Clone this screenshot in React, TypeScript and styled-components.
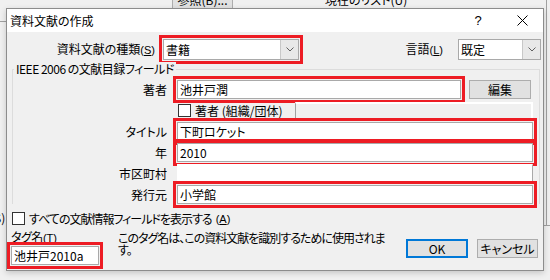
import styled, { createGlobalStyle, css } from "styled-components";

const GlobalStyle = createGlobalStyle`
  html, body {
    margin: 0;
    padding: 0;
    background: #f0f0f0;
  }
  body {
    font-family: "Noto Sans CJK JP", "Liberation Sans", sans-serif;
    font-size: 12px;
    color: #000;
  }
`;

const uiFont = css`
  font-family: "Noto Sans CJK JP", "Liberation Sans", sans-serif;
  font-feature-settings: "palt";
  font-size: 12px;
  line-height: 14px;
`;

const marked = css`
  outline: 3px solid #ed1c24;
  outline-offset: 1px;
`;

const Desktop = styled.div`
  position: relative;
  width: 550px;
  height: 280px;
  overflow: hidden;
  background: #f0f0f0;
  ${uiFont}
`;

/* pieces of the window behind the dialog */
const BackButton = styled.div`
  position: absolute;
  left: 172px;
  top: -10px;
  width: 59px;
  height: 18px;
  border: 1px solid #adadad;
  background: #e1e1e1;
  display: flex;
  align-items: center;
  justify-content: center;
`;

const BackText = styled.div<{ $x: number; $y: number }>`
  position: absolute;
  left: ${(p) => p.$x}px;
  top: ${(p) => p.$y}px;
  white-space: nowrap;
`;

const BackLine = styled.div<{ $x: number; $y: number; $w: number; $h: number }>`
  position: absolute;
  left: ${(p) => p.$x}px;
  top: ${(p) => p.$y}px;
  width: ${(p) => p.$w}px;
  height: ${(p) => p.$h}px;
  background: #a0a0a0;
`;

const Dialog = styled.div`
  position: absolute;
  left: 6px;
  top: 8px;
  width: 536px;
  height: 261px;
  border: 1px solid #8c8c8c;
  background: #f0f0f0;
  box-shadow: 0 2px 6px rgba(0, 0, 0, 0.18);
  display: flex;
  flex-direction: column;
`;

const TitleBar = styled.div`
  height: 23px;
  background: #fff;
  display: flex;
  align-items: center;
  padding-left: 3px;
`;

const Title = styled.div`
  flex: 1;
`;

const CaptionButton = styled.div<{ $w: number }>`
  width: ${(p) => p.$w}px;
  height: 23px;
  display: flex;
  align-items: center;
  justify-content: center;
  font-size: 13px;
  font-family: "Liberation Sans", sans-serif;
`;

const Body = styled.div`
  flex: 1;
  display: flex;
  flex-direction: column;
  padding-top: 7px;
`;

const TopRow = styled.div`
  display: flex;
  align-items: center;
  height: 21px;
`;

const RowLabel = styled.div<{ $w?: number }>`
  width: ${(p) => (p.$w ? `${p.$w}px` : "auto")};
  text-align: right;
  white-space: nowrap;
`;

/* access key "(X)" with underlined letter */
const Accel = styled.span`
  font-family: "Liberation Sans", sans-serif;
  font-size: 11px;
  letter-spacing: 0;
  & u {
    text-underline-offset: 1px;
  }
`;

const Combo = styled.div<{ $w: number; $marked?: boolean }>`
  box-sizing: border-box;
  width: ${(p) => p.$w}px;
  height: 21px;
  border: 1px solid #a9a9a9;
  background: #fff;
  display: flex;
  align-items: stretch;
  ${(p) => p.$marked && marked}
`;

const ComboText = styled.div`
  flex: 1;
  padding-left: 2px;
  display: flex;
  align-items: center;
`;

const ComboArrow = styled.div`
  width: 17px;
  background: #e8e8e8;
  border-left: 1px solid #c8c8c8;
  display: flex;
  align-items: center;
  justify-content: center;
`;

const Spacer = styled.div`
  flex: 1;
`;

const Group = styled.div`
  position: relative;
  box-sizing: border-box;
  margin: 9px 0 0 5px;
  width: 528px;
  border: 1px solid #dcdcdc;
  border-bottom: none;
  padding: 10px 6px 0 0;
  display: grid;
  grid-template-columns: 154px 1fr;
  grid-auto-rows: 19px;
  column-gap: 10px;
  row-gap: 2px;
`;

const Legend = styled.div`
  position: absolute;
  left: 1px;
  top: -8px;
  padding: 0 2px;
  background: #f0f0f0;
  white-space: nowrap;
  letter-spacing: -0.5px;
`;

const FieldLabel = styled.div`
  display: flex;
  align-items: center;
  justify-content: flex-end;
  white-space: nowrap;
`;

const Field = styled.div<{ $marked?: boolean; $plain?: boolean }>`
  box-sizing: border-box;
  height: 19px;
  background: #fff;
  border: 1px solid ${(p) => (p.$plain ? "#fff" : "#a9a9a9")};
  border-right-color: #a9a9a9;
  padding-left: 2px;
  display: flex;
  align-items: center;
  white-space: nowrap;
  ${(p) => p.$marked && marked}
`;

const FieldRow = styled.div`
  display: flex;
  align-items: center;
  gap: 8px;
`;

const Button = styled.div<{ $w: number; $default?: boolean }>`
  box-sizing: border-box;
  width: ${(p) => p.$w}px;
  height: 19px;
  background: #e1e1e1;
  border: ${(p) => (p.$default ? "2px solid #0078d7" : "1px solid #adadad")};
  display: flex;
  align-items: center;
  justify-content: center;
  white-space: nowrap;
`;

const CheckLine = styled.div<{ $indent?: number; $tight?: boolean }>`
  display: flex;
  align-items: center;
  gap: 4px;
  margin-left: ${(p) => p.$indent ?? 0}px;
  white-space: nowrap;
  letter-spacing: ${(p) => (p.$tight ? "-1px" : "0")};
`;

const Check = styled.div`
  box-sizing: border-box;
  width: 13px;
  height: 13px;
  border: 1px solid #333;
  background: #fff;
  flex: none;
`;

const DisabledBox = styled.div`
  box-sizing: border-box;
  margin-left: auto;
  width: 238px;
  height: 18px;
  background: #f0f0f0;
  border-top: 2px solid #fff;
  border-right: 2px solid #fff;
  border-left: 1px solid #a0a0a0;
  border-bottom: 1px solid #e6e6e6;
`;

const ShowAll = styled.div`
  margin: 8px 0 0 5px;
  height: 13px;
  display: flex;
`;

const BottomRow = styled.div`
  display: flex;
  align-items: flex-start;
  margin-top: 5px;
`;

const TagColumn = styled.div`
  margin-left: 4px;
  display: flex;
  flex-direction: column;
  gap: 1px;
`;

const TagLabel = styled.div`
  letter-spacing: -0.5px;
`;

const TagInput = styled(Field)`
  width: 88px;
`;

const Description = styled.div`
  margin: 2px 0 0 19px;
  line-height: 12px;
  white-space: nowrap;
  letter-spacing: -1px;
`;

const Buttons = styled.div`
  margin: 9px 5px 0 auto;
  display: flex;
  gap: 9px;
`;

const Chevron = () => (
  <svg width="8" height="5" viewBox="0 0 8 5">
    <path d="M0.5 0.5 L4 4 L7.5 0.5" fill="none" stroke="#606060" strokeWidth="1" />
  </svg>
);

const CloseIcon = () => (
  <svg width="11" height="11" viewBox="0 0 11 11">
    <path d="M0.5 0.5 L10.5 10.5 M10.5 0.5 L0.5 10.5" stroke="#000" strokeWidth="1" />
  </svg>
);

export default function App() {
  return (
    <Desktop>
      <GlobalStyle />
      <BackButton>参照(B)...</BackButton>
      <BackText $x={325} $y={-7}>現在のリスト(U)</BackText>
      <BackText $x={-10} $y={211}>(S)</BackText>
      <BackLine $x={0} $y={21} $w={6} $h={1} />
      <BackLine $x={546} $y={0} $w={1} $h={225} />
      <BackLine $x={544} $y={225} $w={6} $h={1} />

      <Dialog>
        <TitleBar>
          <Title>資料文献の作成</Title>
          <CaptionButton $w={30}>?</CaptionButton>
          <CaptionButton $w={42} style={{ marginLeft: 8 }}>
            <CloseIcon />
          </CaptionButton>
        </TitleBar>

        <Body>
          <TopRow>
            <RowLabel $w={148}>
              資料文献の種類<Accel>(<u>S</u>)</Accel>
            </RowLabel>
            <Combo $w={136} $marked style={{ marginLeft: 8 }}>
              <ComboText>書籍</ComboText>
              <ComboArrow>
                <Chevron />
              </ComboArrow>
            </Combo>
            <Spacer />
            <RowLabel>
              言語<Accel>(<u>L</u>)</Accel>
            </RowLabel>
            <Combo $w={83} style={{ margin: "0 2px 0 15px" }}>
              <ComboText>既定</ComboText>
              <ComboArrow>
                <Chevron />
              </ComboArrow>
            </Combo>
          </TopRow>

          <Group>
            <Legend>IEEE 2006 の文献目録フィールド</Legend>

            <FieldLabel>著者</FieldLabel>
            <FieldRow>
              <Field $marked style={{ flex: 1 }}>
                池井戸潤
              </Field>
              <Button $w={62} style={{ marginRight: 2 }}>
                編集
              </Button>
            </FieldRow>

            <div />
            <FieldRow>
              <CheckLine $indent={1}>
                <Check />
                著者 (組織/団体)
              </CheckLine>
              <DisabledBox />
            </FieldRow>

            <FieldLabel>タイトル</FieldLabel>
            <Field $marked>下町ロケット</Field>

            <FieldLabel>年</FieldLabel>
            <Field $marked>2010</Field>

            <FieldLabel>市区町村</FieldLabel>
            <Field $plain />

            <FieldLabel>発行元</FieldLabel>
            <Field $marked>小学館</Field>
          </Group>

          <ShowAll>
            <CheckLine $tight>
              <Check />
              すべての文献情報フィールドを表示する<Accel>(<u>A</u>)</Accel>
            </CheckLine>
          </ShowAll>

          <BottomRow>
            <TagColumn>
              <TagLabel>
                タグ名<Accel>(<u>T</u>)</Accel>
              </TagLabel>
              <TagInput $marked>池井戸2010a</TagInput>
            </TagColumn>
            <Description>
              このタグ名は、この資料文献を識別するために使用されま
              <br />
              す。
            </Description>
            <Buttons>
              <Button $w={62} $default>
                OK
              </Button>
              <Button $w={61}>キャンセル</Button>
            </Buttons>
          </BottomRow>
        </Body>
      </Dialog>
    </Desktop>
  );
}
